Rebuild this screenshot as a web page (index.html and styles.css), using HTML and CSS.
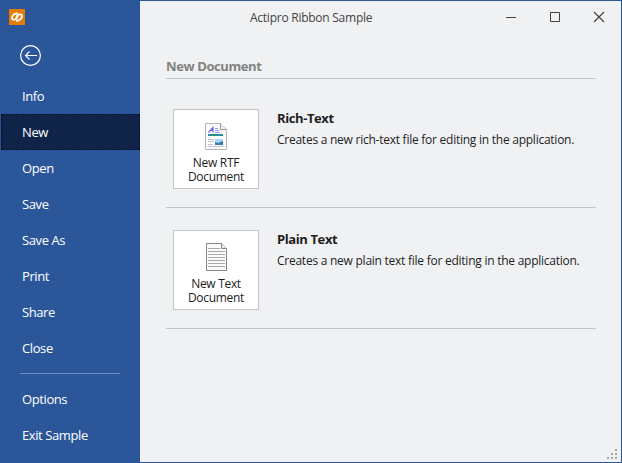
FILE: index.html
```
<!DOCTYPE html>
<html lang="en">
<head>
<meta charset="utf-8">
<title>Actipro Ribbon Sample</title>
<link rel="stylesheet" href="styles.css">
</head>
<body>
<div class="window">
  <aside class="sidebar">
    <svg class="logo" width="16" height="16" viewBox="0 0 16 16">
      <rect width="16" height="16" fill="#e57a05"/>
      <g fill="none" stroke="#fff" stroke-width="1.900">
        <path d="M8.800 4.200C6 4.200 3 6.300 3 9c0 2.200 3.200 2 4.600.6C8.500 8.700 8.800 7.700 8.300 6.600"/>
        <path d="M7.200 11.800C10 11.800 13 9.700 13 7c0-2.200-3.200-2-4.600-.6C7.500 7.300 7.200 8.300 7.700 9.400"/>
      </g>
    </svg>
    <button class="back" aria-label="Back">
      <svg width="22" height="22" viewBox="0 0 22 22" fill="none" stroke="#fff">
        <circle cx="10.500" cy="10.500" r="9.900" stroke-width="1.200"/>
        <path d="M5 10.500h12M9.500 6.500l-4 4 4 4" stroke-width="1.100"/>
      </svg>
    </button>
    <nav class="menu">
      <a class="item">Info</a>
      <a class="item selected">New</a>
      <a class="item">Open</a>
      <a class="item">Save</a>
      <a class="item">Save As</a>
      <a class="item">Print</a>
      <a class="item">Share</a>
      <a class="item">Close</a>
      <div class="separator"></div>
      <a class="item">Options</a>
      <a class="item">Exit Sample</a>
    </nav>
  </aside>
  <main class="main">
    <header class="titlebar">
      <span class="title">Actipro Ribbon Sample</span>
      <svg class="controls" width="110" height="16" viewBox="0 0 110 16" fill="none" stroke="#444">
        <path d="M5 8.500h10M49.500 3.500h9v9h-9z"/>
        <path d="M93 3l10 10M103 3L93 13" stroke-width="1.200"/>
      </svg>
    </header>
    <section class="content">
      <h1 class="heading">New Document</h1>
      <article class="row">
        <button class="card">
          <svg width="24" height="30" viewBox="0 0 24 30">
            <path d="M1.500 2.500h15l6 6v20h-21z" fill="#fbfbfb" stroke="#b4b4b4"/>
            <path d="M16.500 2.500v6h6" fill="#eee" stroke="#999"/>
            <path d="M4.500 11.500l4.500-5v5M6 9.500h3" fill="none" stroke="#655fe8" stroke-width="1.200"/>
            <path d="M11 7.500h3M11 9.500h4M11 11.500h5" stroke="#9a98ee"/>
            <path d="M4 13h15v2H4z" fill="#258e92"/>
            <path d="M4 18.500h6M4 20.500h6M4 23.500h5M4 25.500h15" stroke="#c5c2d5"/>
            <path d="M11 18h8v6h-8z" fill="#a8d8f7"/>
            <path d="M11 21l3 1 5-2v4h-8z" fill="#3979a9"/>
          </svg>
          <span class="label">New RTF<br>Document</span>
        </button>
        <div class="details"><h2>Rich-Text</h2><p>Creates a new rich-text file for editing in the application.</p></div>
      </article>
      <article class="row">
        <button class="card">
          <svg width="24" height="30" viewBox="0 0 24 30">
            <path d="M2.500 1.500h15l5 5v22h-20z" fill="#fafafa" stroke="#858585"/>
            <path d="M17.500 1.500v5h5" fill="#eee" stroke="#858585"/>
            <path d="M4 6.500h12M4 9.500h17M4 12.500h17M4 15.500h17M4 18.500h17M4 21.500h17M4 24.500h17" stroke="#aaa"/>
          </svg>
          <span class="label">New Text<br>Document</span>
        </button>
        <div class="details"><h2>Plain Text</h2><p>Creates a new plain text file for editing in the application.</p></div>
      </article>
    </section>
    <svg class="grip" width="10" height="10" viewBox="0 0 10 10" fill="#a5a5a5">
      <path d="M8 0h2v2H8zM4 4h2v2H4zM8 4h2v2H8zM0 8h2v2H0zM4 8h2v2H4zM8 8h2v2H8z"/>
    </svg>
  </main>
</div>
</body>
</html>
```
FILE: styles.css
```
* { box-sizing: border-box; margin: 0; padding: 0; }
body { width: 622px; height: 463px; overflow: hidden; font-family: "Open Sans", "Noto Sans", sans-serif; font-size: 12px; color: #1e1e1e; }
button { background: none; border: 0; font: inherit; color: inherit; }
svg { display: block; flex: none; }
span, p, h1, h2 { white-space: nowrap; }
.window { display: flex; width: 622px; height: 463px; border: 1px solid #2b579a; background: #f0f1f3; }
.sidebar { width: 139px; background: #2b579a; color: #fff; flex: none; }
.logo { margin: 8px 0 0 8px; }
.back { display: block; margin: 20px 0 0 19px; }
.menu { margin-top: 11px; font-size: 13px; font-weight: 500; }
.item { display: flex; align-items: center; height: 36px; padding-left: 21px; letter-spacing: -0.400px; }
.item.selected { background: #10244a; outline: 1px dashed #071429; outline-offset: -1px; }
.separator { height: 1px; width: 100px; margin: 7px 0 7px 19px; background: #6b91cd; }
.main { position: relative; flex: 1; }
.titlebar { display: flex; align-items: center; height: 32px; color: #444; }
.title { margin-left: 110px; width: 122px; letter-spacing: -0.250px; }
.controls { margin-left: 129px; }
.content { width: 430px; margin: 23px 0 0 26px; }
.heading { height: 23px; border-bottom: 1px solid #c3c4c9; font-size: 13px; line-height: 21px; color: #828282; letter-spacing: -0.400px; }
.row { display: flex; height: 121px; padding: 22px 0 0 7px; border-bottom: 1px solid #c3c6c9; }
.heading + .row { height: 129px; padding-top: 30px; }
.card { display: flex; flex-direction: column; align-items: center; width: 86px; height: 80px; padding-top: 11px; background: #fff; border: 1px solid #c3c6c9; }
.label { margin-top: 5px; line-height: 14px; text-align: center; letter-spacing: -0.300px; }
.details { margin-left: 18px; }
.details h2 { font-size: 13px; line-height: 18px; letter-spacing: -0.400px; }
.details p { margin-top: 4px; line-height: 18px; letter-spacing: -0.250px; }
.grip { position: absolute; right: 4px; bottom: 3px; }
```
